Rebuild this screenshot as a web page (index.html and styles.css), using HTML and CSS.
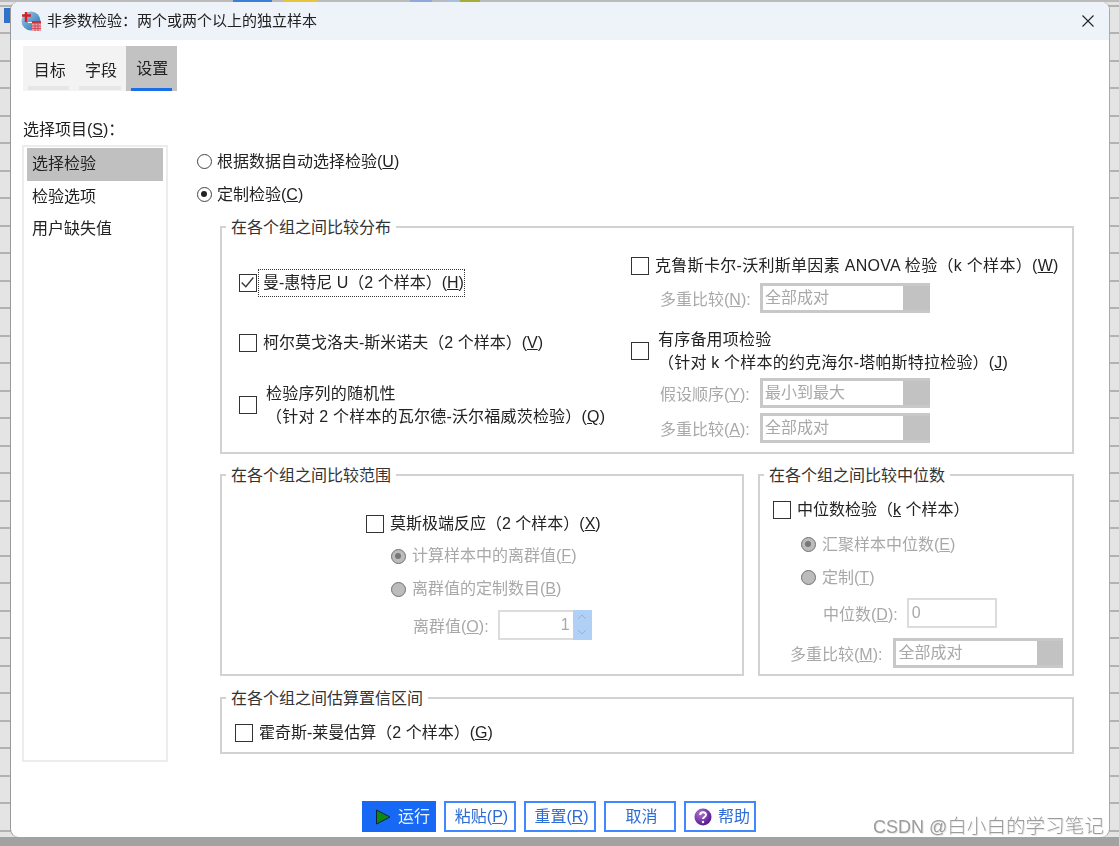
FILE: index.html
```html
<!DOCTYPE html>
<html lang="zh-CN">
<head>
<meta charset="utf-8">
<title>非参数检验</title>
<link rel="stylesheet" href="styles.css">
</head>
<body>
<div class="desk">
  <div class="bg-icon"></div>
  <div class="dialog">
    <header class="titlebar">
      <svg class="app-icon" viewBox="0 0 20 20" width="20" height="20">
        <defs><linearGradient id="gl" x1="0" y1="0" x2="1" y2="1"><stop offset="0" stop-color="#a9cbe6"/><stop offset="1" stop-color="#1f6fb3"/></linearGradient></defs>
        <circle cx="10" cy="10" r="9.5" fill="url(#gl)"/>
        <path d="M5 1v10M1 4.5h9" stroke="#d4202a" stroke-width="2.4" fill="none"/>
        <path d="M7 11.5h5" stroke="#fff" stroke-width="1.2"/>
        <rect x="11" y="10" width="9" height="10" fill="#e8a0a8"/>
        <path d="M11 10h9v2.5h-9z" fill="#c8323c"/>
        <path d="M14 12.5v7.5M17 12.5v7.5M11 15h9M11 17.5h9" stroke="#c8323c" stroke-width=".7"/>
      </svg>
      <span class="title-text">非参数检验：两个或两个以上的独立样本</span>
      <svg class="close-icon" viewBox="0 0 12 12" width="12" height="12"><path d="M.5.5l11 11M11.5.5l-11 11" stroke="#222" stroke-width="1.1" fill="none"/></svg>
    </header>

    <nav class="tabs">
      <div class="tab">目标</div>
      <div class="tab">字段</div>
      <div class="tab tab-active">设置</div>
    </nav>

    <main class="main">
      <aside class="side">
        <div class="side-label">选择项目(<u>S</u>)：</div>
        <ul class="list">
          <li class="item item-selected">选择检验</li>
          <li class="item">检验选项</li>
          <li class="item">用户缺失值</li>
        </ul>
      </aside>

      <section class="content">
        <label class="radio top-radio"><span class="rb"></span>根据数据自动选择检验(<u>U</u>)</label>
        <label class="radio top-radio"><span class="rb rb-on"></span>定制检验(<u>C</u>)</label>

        <div class="group group-dist">
          <div class="legend">在各个组之间比较分布</div>
          <div class="dist-left">
            <div class="chk chk-1">
              <span class="cb"><svg viewBox="0 0 18 18" width="15" height="15" class="tick"><path d="M2 9l5 5L16 3" stroke="#333" stroke-width="1.6" fill="none"/></svg></span>
              <span class="focus">曼-惠特尼 U（2 个样本）(<u>H</u>)</span>
            </div>
            <div class="chk chk-2"><span class="cb"></span><span class="txt">柯尔莫戈洛夫-斯米诺夫（2 个样本）(<u>V</u>)</span></div>
            <div class="chk chk-3"><span class="cb"></span><span class="txt two">检验序列的随机性<br>（针对 2 个样本的瓦尔德-沃尔福威茨检验）(<u>Q</u>)</span></div>
          </div>
          <div class="dist-right">
            <div class="chk chk-a"><span class="cb"></span><span class="txt">克鲁斯卡尔-沃利斯单因素 ANOVA 检验（k 个样本）(<u>W</u>)</span></div>
            <div class="selrow sel-a"><span class="dim lbl">多重比较(<u>N</u>):</span><div class="select"><span class="sel-val">全部成对</span><span class="sel-btn"></span></div></div>
            <div class="chk chk-b"><span class="cb"></span><span class="txt two">有序备用项检验<br>（针对 k 个样本的约克海尔-塔帕斯特拉检验）(<u>J</u>)</span></div>
            <div class="selrow sel-c"><span class="dim lbl">假设顺序(<u>Y</u>):</span><div class="select"><span class="sel-val">最小到最大</span><span class="sel-btn"></span></div></div>
            <div class="selrow sel-d"><span class="dim lbl">多重比较(<u>A</u>):</span><div class="select"><span class="sel-val">全部成对</span><span class="sel-btn"></span></div></div>
          </div>
        </div>

        <div class="row-groups">
          <div class="group group-range">
            <div class="legend">在各个组之间比较范围</div>
            <div class="chk"><span class="cb"></span><span class="txt">莫斯极端反应（2 个样本）(<u>X</u>)</span></div>
            <div class="dim radio sub-radio first-radio"><span class="rb rb-dis rb-on"></span>计算样本中的离群值(<u>F</u>)</div>
            <div class="dim radio sub-radio"><span class="rb rb-dis"></span>离群值的定制数目(<u>B</u>)</div>
            <div class="spin-row">
              <span class="dim">离群值(<u>O</u>):</span>
              <div class="spin">
                <span class="spin-val">1</span>
                <span class="spin-btns">
                  <svg viewBox="0 0 10 6" width="10" height="6"><path d="M1 5l4-4 4 4" stroke="#9db0c6" fill="none"/></svg>
                  <svg viewBox="0 0 10 6" width="10" height="6"><path d="M1 1l4 4 4-4" stroke="#9db0c6" fill="none"/></svg>
                </span>
              </div>
            </div>
          </div>

          <div class="group group-median">
            <div class="legend">在各个组之间比较中位数</div>
            <div class="chk"><span class="cb"></span><span class="txt">中位数检验（<u>k</u> 个样本）</span></div>
            <div class="dim radio med-radio med-first"><span class="rb rb-dis rb-on"></span>汇聚样本中位数(<u>E</u>)</div>
            <div class="dim radio med-radio"><span class="rb rb-dis"></span>定制(<u>T</u>)</div>
            <div class="med-input-row"><span class="dim">中位数(<u>D</u>):</span><div class="textbox">0</div></div>
            <div class="selrow med-sel"><span class="dim">多重比较(<u>M</u>):</span><div class="select select-wide"><span class="sel-val">全部成对</span><span class="sel-btn"></span></div></div>
          </div>
        </div>

        <div class="group group-ci">
          <div class="legend">在各个组之间估算置信区间</div>
          <div class="chk"><span class="cb"></span><span class="txt">霍奇斯-莱曼估算（2 个样本）(<u>G</u>)</span></div>
        </div>
      </section>
    </main>

    <footer class="footer">
      <button class="btn btn-run"><svg viewBox="0 0 16 16" width="16" height="16"><path d="M1.5 1v14L15 8z" fill="#0a8a12" stroke="#123" stroke-width="1"/></svg>运行</button>
      <button class="btn">粘贴(<u>P</u>)</button>
      <button class="btn">重置(<u>R</u>)</button>
      <button class="btn">取消</button>
      <button class="btn btn-help"><svg viewBox="0 0 18 18" width="18" height="18"><defs><radialGradient id="hp" cx=".35" cy=".3" r=".8"><stop offset="0" stop-color="#b070d0"/><stop offset="1" stop-color="#4a0f8a"/></radialGradient></defs><circle cx="9" cy="9" r="8.5" fill="url(#hp)"/><path d="M6.2 7c0-3.6 5.8-3.6 5.8-.2 0 2.2-3 2.2-3 4.2" stroke="#fff" stroke-width="2" fill="none"/><circle cx="9" cy="14" r="1.2" fill="#fff"/></svg>帮助</button>
    </footer>

    <div class="watermark">CSDN @<span class="wm-cjk">白小白的学习笔记</span></div>
  </div>
</div>
</body>
</html>
```
FILE: styles.css
```css
* { box-sizing: border-box; }
html, body { margin: 0; padding: 0; }
body {
  width: 1119px;
  height: 846px;
  overflow: hidden;
  font-family: "Liberation Sans", "Noto Sans CJK SC", sans-serif;
  font-size: 16px;
  color: #222;
}
.desk {
  position: relative;
  width: 1119px;
  height: 846px;
  padding: 2px 0 0 11px;
  background-color: #e2e2e2;
  background-image:
    linear-gradient(to right, #bbb 0 233px, #3a7fd8 233px 272px, #bbb 272px 283px, #e6c53a 283px 318px, #bbb 318px 410px, #8fa8d8 410px 432px, #bbb 432px 446px, #a8c0d8 446px 460px, #a3ad3a 460px 480px, #bbb 480px 1119px),
    linear-gradient(to bottom, transparent 837px, #a2a2a2 837px),
    repeating-linear-gradient(to bottom, #e4e4e4 0 25.5px, #b2b2b2 25.5px 27.5px);
  background-repeat: no-repeat;
  background-size: 100% 2px, 100% 100%, 100% 900px;
  background-position: 0 0, 0 0, 0 -21px;
}
.bg-icon {
  position: absolute;
  left: 4px;
  top: 8px;
  width: 7px;
  height: 15px;
  background: #2f73c8;
}
.dialog {
  position: relative;
  width: 1098px;
  height: 835px;
  background: #fff;
  border-radius: 8px;
  overflow: hidden;
  display: flex;
  flex-direction: column;
  box-shadow: -1px 0 0 #9a9a9a, 1px 0 0 #aaa;
  filter: blur(0.35px);
}
.titlebar {
  height: 38px;
  flex: none;
  background: #eef3fa;
  display: flex;
  align-items: center;
  padding: 0 15px 0 10px;
}
.app-icon { flex: none; }
.title-text { margin-left: 6px; font-size: 15px; line-height: 20px; }
.close-icon { margin-left: auto; }

.tabs { display: flex; margin: 6px 0 0 12px; width: 154px; height: 45px; background: #f3f3f3; flex: none; }
.tab {
  position: relative;
  width: 51.3px;
  text-align: center;
  line-height: 24px;
  padding: 13px 0 0 2px;
}
.tab::after {
  content: "";
  position: absolute;
  left: 5px;
  right: 5px;
  bottom: 1px;
  height: 4px;
  background: #e6e6e6;
}
.tab-active { background: #c2c2c2; padding-top: 11px; }
.tab-active::after { background: #1a6fe8; height: 3px; bottom: 0; }

.main { display: flex; margin-top: 27px; padding-left: 11px; flex: none; }
.side { width: 146px; flex: none; }
.side-label { height: 24px; line-height: 24px; padding-left: 1px; }
.list {
  list-style: none;
  margin: 3px 0 0;
  padding: 1px 3px;
  width: 146px;
  height: 617px;
  border: 2px solid #ececec;
}
.item { height: 32.5px; line-height: 32px; padding-left: 5px; }
.item-selected { background: #c0c0c0; }

.content { padding: 27px 0 0 29px; width: 935px; }
.radio { display: flex; align-items: center; height: 33px; line-height: 24px; }
.rb {
  flex: none;
  position: relative;
  width: 15px;
  height: 15px;
  border: 1.6px solid #444;
  border-radius: 50%;
  background: #fff;
  margin-right: 6px;
}
.top-radio .rb { margin-right: 5px; }
.rb-on::after {
  content: "";
  position: absolute;
  left: 3px;
  top: 3px;
  width: 6px;
  height: 6px;
  border-radius: 50%;
  background: #222;
}
.rb-dis { background: #bcbcbc; border-color: #707070; }
.rb-dis.rb-on::after { background: #777; }

.group {
  position: relative;
  width: 854px;
  margin-left: 23px;
  border: 2px solid #d2d2d2;
}
.legend {
  position: absolute;
  left: 4px;
  top: -12px;
  padding: 0 5px;
  background: #fff;
  line-height: 24px;
  white-space: nowrap;
  color: #333;
}
.dim { color: #a8a8a8; }
.chk { display: flex; align-items: center; min-height: 24px; }
.cb {
  flex: none;
  position: relative;
  width: 18px;
  height: 18px;
  border: 1.6px solid #333;
  background: #fff;
  margin-right: 6px;
}
.tick { display: block; }
.txt { line-height: 24px; white-space: nowrap; }
.two { line-height: 23px; }

.group-dist { margin-top: 15px; height: 228px; display: flex; }
.dist-left { width: 409px; padding: 43px 0 0 17px; flex: none; }
.dist-right { padding-top: 26px; flex: none; letter-spacing: 0.2px; }
.chk-a { letter-spacing: 0.3px; }
.chk-3 .two { letter-spacing: 0.2px; }
.focus {
  position: relative;
  white-space: nowrap;
  line-height: 24px;
}
.focus::before {
  content: "";
  position: absolute;
  left: -5px;
  right: -1px;
  top: -2px;
  bottom: -2px;
  border: 1px dotted #333;
}
.chk-2 { margin-top: 36px; }
.chk-3 { margin-top: 27px; }
.chk-3 .two { margin-left: 3px; }
.chk-b { margin-top: 15px; }
.chk-b .two { margin-left: 3px; }
.selrow { display: flex; align-items: center; height: 30px; }
.lbl { width: 129px; padding-left: 29px; flex: none; white-space: nowrap; }
.sel-a { margin-top: 5px; letter-spacing: 0; }
.sel-c { margin-top: 4px; letter-spacing: 0; }
.sel-d { margin-top: 5px; letter-spacing: 0; }
.select {
  display: flex;
  width: 170px;
  height: 30px;
  border: 3px solid #c8c8c8;
  border-right: 0;
  background: #fff;
  flex: none;
}
.sel-val { flex: 1; color: #a8a8a8; line-height: 24px; padding-left: 2px; white-space: nowrap; }
.sel-btn { width: 27px; background: #c2c2c2; flex: none; }

.row-groups { display: flex; margin: 20px 0 0 23px; gap: 14px; }
.row-groups .group { margin: 0; height: 202px; }
.group-range { width: 524px; padding: 36px 0 0 144px; }
.sub-radio { margin-left: 25px; }
.first-radio { margin-top: 3.5px; }
.spin-row { display: flex; align-items: center; margin: 4px 0 0 47px; height: 30px; }
.spin {
  display: flex;
  align-items: stretch;
  margin-left: 9px;
  width: 94px;
  height: 30px;
  border: 2px solid #dcdcdc;
  border-right: 0;
}
.spin-val { flex: 1; text-align: right; color: #a8a8a8; line-height: 26px; padding-right: 3px; }
.spin-btns {
  width: 19px;
  background: #b0d0f6;
  display: flex;
  flex-direction: column;
  align-items: center;
  justify-content: space-around;
  margin: -2px 0;
}
.group-median { width: 316px; padding: 22px 0 0 13px; }
.med-radio { margin-left: 28px; }
.med-first { margin-top: 6px; }
.med-input-row { display: flex; align-items: center; height: 30px; margin: 4px 0 0 50px; }
.textbox {
  margin-left: 9px;
  width: 90px;
  height: 30px;
  border: 2px solid #dcdcdc;
  color: #a8a8a8;
  line-height: 26px;
  padding-left: 3px;
}
.med-sel { margin: 10px 0 0 17px; }
.select-wide { width: 170px; margin-left: 11px; }
.select-wide .sel-btn { width: 26px; }

.group-ci { margin-top: 21px; height: 57px; padding: 22px 0 0 13px; }

.footer { display: flex; gap: 8px; margin: 39px 0 0 351px; flex: none; }
.btn {
  width: 72px;
  height: 31px;
  padding: 0 0 0 3px;
  background: #fff;
  border: 2px solid #3f88ff;
  color: #2c6cd6;
  font: inherit;
  line-height: 24px;
  display: flex;
  align-items: center;
  justify-content: center;
}
.btn-run {
  width: 74px;
  background: #1668f5;
  border-color: #1668f5;
  color: #eaf2ff;
  justify-content: flex-start;
  padding-left: 11px;
}
.btn-help { justify-content: flex-start; padding-left: 8px; }
.btn-run svg { margin-right: 7px; }
.btn-help svg { margin-right: 6px; }

.watermark {
  position: absolute;
  right: 5px;
  bottom: -3px;
  font-size: 18px;
  line-height: 26px;
  color: #9c9c9c;
  white-space: nowrap;
  text-shadow: 1px 1px 0 #e8e8e8;
}
.wm-cjk { font-size: 19.6px; font-weight: 300; }
```
